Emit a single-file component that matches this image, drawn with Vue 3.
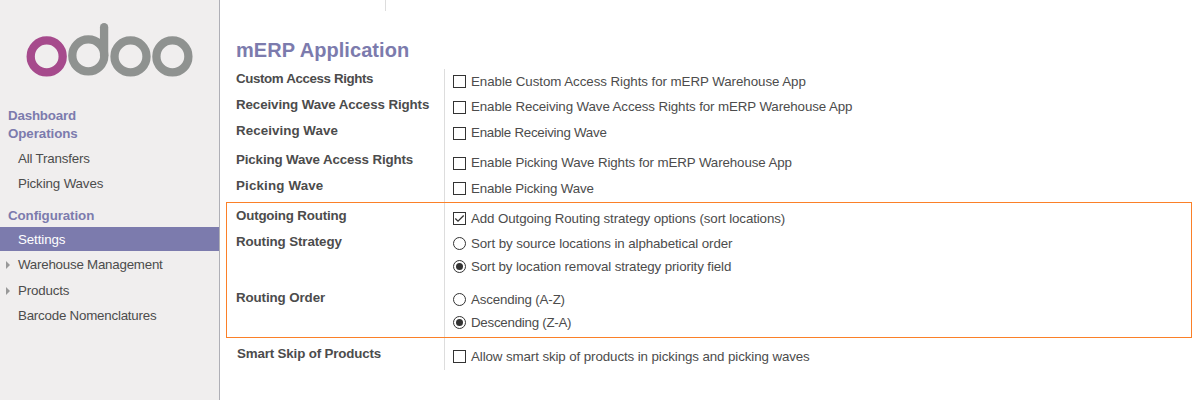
<script setup>
const menu = [
  { text: 'Dashboard', kind: 'head', h: 18, ls: -0.19 },
  { text: 'Operations', kind: 'head', h: 21, ls: -0.07 },
  { text: 'All Transfers', h: 25, ls: -0.18 },
  { text: 'Picking Waves', h: 32, ls: -0.13 },
  { text: 'Configuration', kind: 'head', h: 21, ls: -0.09 },
  { text: 'Settings', h: 24, active: true, ls: -0.09 },
  { text: 'Warehouse Management', h: 26, arrow: true, ls: -0.23 },
  { text: 'Products', h: 25, arrow: true, ls: -0.16 },
  { text: 'Barcode Nomenclatures', h: 25, ls: -0.22 },
]
const rows = [
  { label: 'Custom Access Rights', ls: -0.38, h: 26, pad: 4, opts: [{ t: 'Enable Custom Access Rights for mERP Warehouse App', ls: -0.06 }] },
  { label: 'Receiving Wave Access Rights', ls: -0.1, h: 26, pad: 3, opts: [{ t: 'Enable Receiving Wave Access Rights for mERP Warehouse App', low: true, ls: -0.11 }] },
  { label: 'Receiving Wave', ls: 0.07, h: 29, pad: 3, opts: [{ t: 'Enable Receiving Wave', low: true, ls: -0.26 }] },
  { label: 'Picking Wave Access Rights', ls: -0.13, h: 26, pad: 4, opts: [{ t: 'Enable Picking Wave Rights for mERP Warehouse App', low: true, ls: -0.11 }] },
  { label: 'Picking Wave', ls: 0.16, h: 30, pad: 4, opts: [{ t: 'Enable Picking Wave', ls: -0.14 }] },
  { label: 'Outgoing Routing', ls: -0.18, h: 26, pad: 4, opts: [{ t: 'Add Outgoing Routing strategy options (sort locations)', on: true, ls: -0.11 }] },
  { label: 'Routing Strategy', ls: -0.1, h: 56, pad: 3, radio: true, opts: [{ t: 'Sort by source locations in alphabetical order', ls: -0.1 }, { t: 'Sort by location removal strategy priority field', on: true, ls: -0.12 }] },
  { label: 'Routing Order', ls: -0.1, h: 56, pad: 3, radio: true, opts: [{ t: 'Ascending (A-Z)', ls: -0.16 }, { t: 'Descending (Z-A)', on: true, ls: -0.26 }] },
  { label: 'Smart Skip of Products', ls: -0.15, h: 26, pad: 4, shift: true, opts: [{ t: 'Allow smart skip of products in pickings and picking waves', ls: -0.1 }] },
]
const track = (v) => ({ letterSpacing: v + 'px' })
</script>

<template>
  <div class="page">
    <aside>
      <svg class="logo" width="219" height="107" viewBox="0 0 219 107" fill="none" stroke-width="8.3">
        <circle cx="46.7" cy="56.4" r="16" stroke="#a64a8c" />
        <g stroke="#8f9290">
          <circle cx="88.3" cy="55.4" r="16" />
          <path d="M104.1 27.2V55.4" stroke-linecap="round" />
          <circle cx="130.5" cy="56.4" r="16" />
          <circle cx="172.4" cy="56.4" r="16" />
        </g>
      </svg>
      <div v-for="m in menu" :key="m.text" class="item" :class="{ head: m.kind, active: m.active }" :style="{ height: m.h + 'px' }">
        <svg v-if="m.arrow" class="arrow" width="4" height="8" viewBox="0 0 4 8"><path d="M0 0L4 4L0 8Z" fill="#999" /></svg>
        <span :style="track(m.ls)">{{ m.text }}</span>
      </div>
    </aside>
    <main>
      <div class="tick"></div>
      <h1>mERP Application</h1>
      <div v-for="r in rows" :key="r.label" class="row" :style="{ height: r.h + 'px' }">
        <div class="label" :class="{ shift: r.shift }"><span :style="track(r.ls)">{{ r.label }}</span></div>
        <div class="opts" :style="{ paddingTop: r.pad + 'px' }">
          <div v-for="o in r.opts" :key="o.t" class="opt">
            <svg :class="{ low: o.low }" width="13" height="13" viewBox="0 0 13 13" fill="none" stroke="#333">
              <template v-if="r.radio">
                <circle cx="6.5" cy="6.5" r="6" />
                <circle v-if="o.on" cx="6.5" cy="6.5" r="3.5" fill="#333" stroke="none" />
              </template>
              <template v-else>
                <rect x=".5" y=".5" width="12" height="12" />
                <path v-if="o.on" d="M2.3 6.5L5 9.2L10.7 3.5" stroke-width="1.3" />
              </template>
            </svg>
            <span :style="track(o.ls)">{{ o.t }}</span>
          </div>
        </div>
      </div>
      <div class="highlight"></div>
    </main>
  </div>
</template>

<style>
body { margin: 0; background: #fff; }
</style>
<style scoped>
.page { display: flex; width: 1200px; height: 400px; overflow: hidden; font: 13.33px/18px "Liberation Sans", Arial, sans-serif; color: #4c4c4c; white-space: nowrap; }
aside { box-sizing: border-box; width: 220px; background: #f0eeee; border-right: 1px solid #afafb6; }
.logo { display: block; }
.item { position: relative; padding-left: 18px; line-height: 18px; }
.item.head { padding-left: 8px; font-weight: bold; color: #7c7bad; }
.item:nth-of-type(3) { margin-top: 4px; }
.item.active { box-sizing: border-box; background: #7c7bad; color: #fff; line-height: 25px; margin-bottom: 5px; margin-top: -1px; }
.arrow { position: absolute; left: 6px; top: 5px; }
main { position: relative; flex: 1; }
.tick { width: 1px; height: 11px; margin-left: 165px; background: #ddd; }
h1 { margin: 0; padding: 27px 0 0 16px; height: 31px; font-size: 20px; line-height: 24px; letter-spacing: .06px; color: #7c7bad; }
.row { display: flex; }
.label { box-sizing: border-box; width: 225px; padding: 1px 0 0 16px; border-right: 1px solid #ddd; font-weight: bold; }
.label.shift { padding-left: 17px; }
.opts { padding-left: 8px; }
.opt { display: flex; gap: 5px; height: 23px; }
.opt svg { margin-top: 2px; }
.opt svg.low { margin-top: 3px; }
.highlight { position: absolute; left: 6px; top: 202px; width: 964px; height: 134px; border: 1px solid #fb8028; }
</style>
